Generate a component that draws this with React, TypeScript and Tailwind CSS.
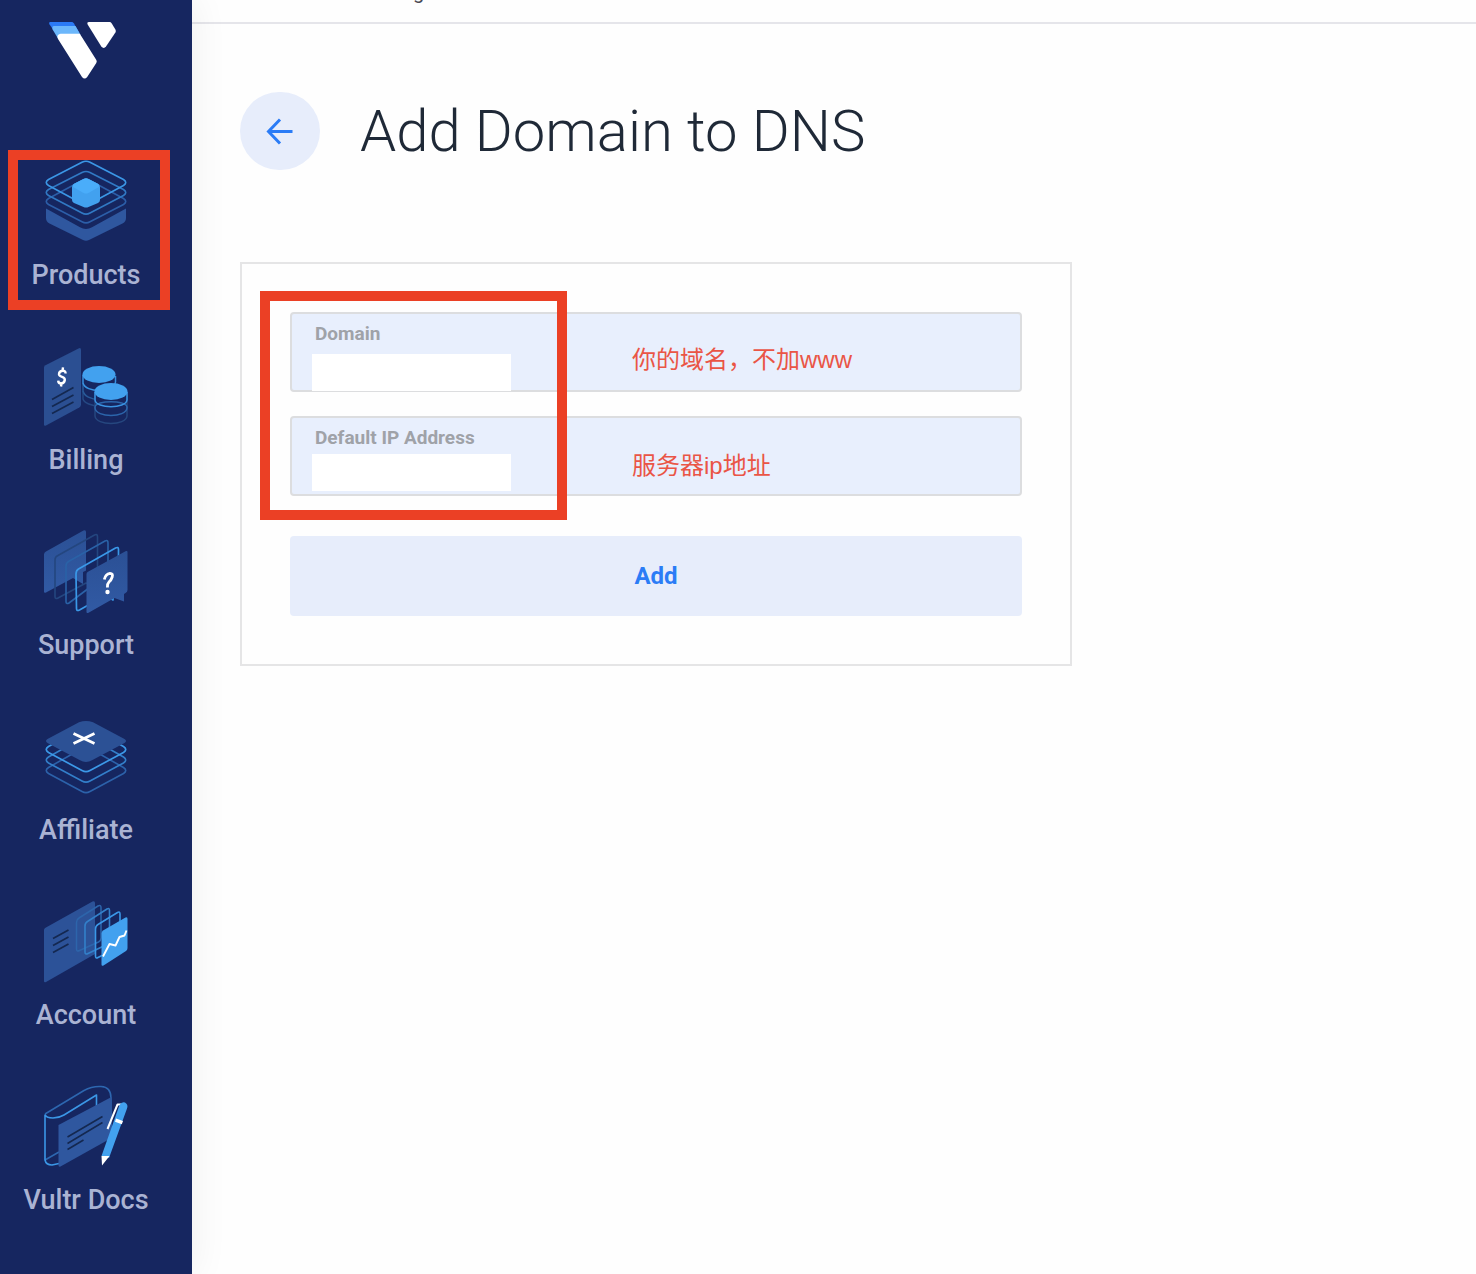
import type { ReactNode } from "react";

function Logo() {
  return (
    <svg viewBox="46 20 74 62" className="h-[62px] w-[74px]" role="img" aria-label="Vultr">
      <path d="M50.2 22H71.6Q73 22 73.8 23.2L79.5 33H55.5L49.2 24Q48.6 22 50.2 22Z" fill="#2b7af5" />
      <path d="M54 26H75.5L80.6 35L60 38.5H58L52.6 29.5Q51.6 26 54 26Z" fill="#6cb7fb" />
      <path d="M60.5 33.8H79.8L96.2 59.8Q97.3 61.4 96.3 63L87.2 77Q84.6 80 82 77L58 39Q56 34.6 60.5 33.8Z" fill="#fff" />
      <path d="M89 22H109.6Q110.8 22 111.6 23.2L115.4 29.4Q116.3 31 115.4 32.6L106 46.6Q103.8 49.4 101.3 46.6L87.8 24.8Q86.4 22 89 22Z" fill="#fff" />
    </svg>
  );
}

function NavIcon({ viewBox, children }: { viewBox: string; children: ReactNode }) {
  return (
    <svg viewBox={viewBox} className="size-[88px]" fill="none" aria-hidden="true" strokeLinejoin="round">
      {children}
    </svg>
  );
}

const ProductsIcon = (
  <NavIcon viewBox="42 158 88 88">
    <path d="M46 208.5L80 227.3Q86 230.5 92 227.3L126 208.5V218Q126 221.5 122.5 223.5L89 240Q86 241.5 83 240L49.5 223.5Q46 221.5 46 218Z" fill="#2f579f" />
    <path d="M82 180.5Q86 178.5 90 180.5L123.5 198.5Q128 201.5 123.5 204.5L90 221.8Q86 224 82 221.8L48.5 204.5Q44 201.5 48.5 198.5Z" stroke="#2c5ea8" strokeWidth="1.6" />
    <path d="M82 172.5Q86 170.5 90 172.5L123.5 189.5Q128 192.5 123.5 195.5L90 213Q86 215.2 82 213L48.5 195.5Q44 192.5 48.5 189.5Z" stroke="#3179c4" strokeWidth="1.6" />
    <path d="M82 162.3Q86 160.2 90 162.3L123.5 179.5Q128 182.5 123.5 185.5L90 203.5Q86 205.7 82 203.5L48.5 185.5Q44 182.5 48.5 179.5Z" stroke="#3b97e6" strokeWidth="1.6" />
    <path d="M84 178.8Q86 177.7 88 178.8L98 183.8Q100 185 100 187V200Q100 202 98 203L88.5 207Q86 208 83.5 207L74 203Q72 202 72 200V187Q72 185 74 183.8Z" fill="#42a1ef" />
    <path d="M84 178.8Q86 177.7 88 178.8L98.5 184.2Q100 186 98.5 187.3L88.5 193Q86 194.2 83.5 193L73.5 187.3Q72 186 73.5 184.2Z" fill="#4aadfa" />
  </NavIcon>
);

const BillingIcon = (
  <NavIcon viewBox="42 343 88 88">
    <path d="M44 367.5Q44 366 45.5 365.2L78.5 348.4Q81 347.2 81 350V404.5Q81 406.500 79.3 407.5L46 425.5Q44 426.5 44 424.5Z" fill="#2b4f92" />
    <path d="M65.6 373.6Q65.600 370.6 62.600 370.800Q58.900 371.400 59 374.400Q59.200 376 62 376.800Q65 377.800 64.800 380Q64.300 383.400 61 383.500Q58.300 383.300 58.200 380.600M63 367.300L62.500 371M61.500 383L61 386.500" stroke="#fff" strokeWidth="2.400" />
    <path d="M52 399.5L73.5 387.5M52 406.5L73.5 395M52 413.5L73.5 402" stroke="#142850" strokeWidth="1.7" />
    <g strokeWidth="1.5">
      <path d="M83 391V399C84 403 92 406 99 406Q110 405.5 114.5 402" stroke="#254883" />
      <path d="M83 383V391C84 396 91 399.5 99 399.5Q108 399.5 115 392" stroke="#285998" />
      <path d="M83 375V383C84 388 92 390.5 99 390.5C108 390.5 115 387 115.5 382V376" stroke="#3991df" />
      <ellipse cx="99" cy="374.5" rx="16.5" ry="8.5" fill="#42a1ef" />
      <path d="M95 392V416C96 426 126 426 127 416V392" fill="#162660" stroke="#26477f" />
      <path d="M95 407C96 400 126 400 127 407V408C126 418 96 418 95 408Z" stroke="#2c65ab" />
      <path d="M95 392V400C96 409 126 409 127 400V392" stroke="#3a94e3" />
      <ellipse cx="111" cy="391.5" rx="16.5" ry="8.5" fill="#42a1ef" />
    </g>
  </NavIcon>
);

const SupportIcon = (
  <NavIcon viewBox="42 528 88 88">
    <defs>
      <linearGradient id="bubble" x1="0" y1="0" x2="0" y2="1">
        <stop offset="0" stopColor="#2b5095" />
        <stop offset="1" stopColor="#315aa4" />
      </linearGradient>
    </defs>
    <path d="M44 554.5Q44 552.5 46 551.5L83.5 530.5Q86 529.5 86 532V570.5L83 572V584L73 578L46 592.5Q44 593.5 44 591.5Z" fill="url(#bubble)" />
    <path d="M55 560Q55 557 57.5 555.8L94.5 535Q97.5 533.5 97.5 537V572Q97.5 576 95 577.3L94 578V586L86 583L58 598Q55 599.5 55 596.5Z" stroke="#24467f" strokeWidth="1.6" />
    <path d="M66 566Q66 563 68.5 561.5L105 541Q108 539.5 108 543V578L106 586L97 582L69 603Q66 604.5 66 601.5Z" stroke="#2a62a7" strokeWidth="1.6" />
    <path d="M76 574Q76 570.5 78.5 569L115.5 548Q118.5 546.5 118.5 549.5V584Q118.5 588 116 589.5L113 591.5V600L106 595L79.5 610Q76.5 611.5 76.5 608.5Z" stroke="#3a98e8" strokeWidth="1.7" />
    <path d="M86.5 574Q86.5 572.5 88 571.7L126 551Q127.5 550.5 127.5 552V590Q127.5 592 125.5 593L124 594V601.5L114.5 598L88.5 612.7Q86.5 613.5 86.5 612Z" fill="url(#bubble)" />
    <path d="M104.3 579.5Q105.500 574 110 573.3Q113.300 573.300 112.200 577Q111.300 580 109 582Q107.200 583.700 107.400 587.500" stroke="#fff" strokeWidth="2.8" />
    <circle cx="107.500" cy="592" r="2.2" fill="#fff" />
  </NavIcon>
);

const AffiliateIcon = (
  <NavIcon viewBox="42 713 88 88">
    <path d="M82 748.5L48.5 767.5Q44 770.5 48.5 773.5L82 791.5Q86 793.7 90 791.5L123.5 773.5Q128 770.5 123.5 767.5L90 748.5Z" stroke="#2c62aa" strokeWidth="1.6" />
    <path d="M82 738L48.5 757Q44 760 48.5 763L82 781Q86 783.2 90 781L123.5 763Q128 760 123.5 757L90 738Z" stroke="#337fca" strokeWidth="1.6" />
    <path d="M82 728L48.5 746.5Q44 749.5 48.5 752.5L82 770.5Q86 772.7 90 770.5L123.5 752.5Q128 749.5 123.5 746.5L90 728Z" stroke="#3c99e8" strokeWidth="1.7" />
    <path d="M79 722.3Q86 719.5 93 722.3L124.5 739Q127.5 741 124.5 743L92 760.3Q86 763.5 80 760.3L47.5 743Q44.5 741 47.5 739Z" fill="#2c5195" />
    <path d="M73.5 733.5L94.5 743.5M94.5 733.5L73.5 743.5" stroke="#fff" strokeWidth="2.8" />
  </NavIcon>
);

const AccountIcon = (
  <NavIcon viewBox="42 898 88 88">
    <path d="M44 930Q44 928.5 45.5 927.7L92.5 901.5Q95 900.5 95 903V954L46 982Q44 983 44 981Z" fill="#2c5298" />
    <path d="M53 938.5L68.5 930M53 945.5L68.5 937M53 952.5L68.5 944" stroke="#142850" strokeWidth="1.7" />
    <path d="M76.5 922.5Q76.5 919.5 79 918L98 906Q101 904.5 101 907.5V938Q101 940.5 98.5 942L79.5 950.5Q76.500 952 76.5 949Z" stroke="#2d65ab" strokeWidth="1.5" />
    <path d="M85 926Q85 923 87.5 921.5L107 909Q109.5 907.5 109.5 910.5V940Q109.5 943 107 944.5L88 953.5Q85 955 85 952Z" stroke="#3380ca" strokeWidth="1.6" />
    <path d="M95.5 929Q95.5 926 98 924.5L117.5 912.5Q120 911 120 914V944Q120 946 118 947.5L98 957.5Q95.5 959 95.5 956Z" stroke="#3a97e7" strokeWidth="1.6" />
    <path d="M101.5 933.5Q101.5 931.5 103 930.5L125.5 917.5Q127.5 916.5 127.5 919V948Q127.5 950 126 951L103.5 965.5Q101.5 966.5 101.5 964.5Z" fill="#42a1ef" />
    <path d="M103 956.5L109.5 944L115.5 945.5L119.5 937L124.5 935.5L126.5 930.5" stroke="#fff" strokeWidth="1.9" />
  </NavIcon>
);

const DocsIcon = (
  <NavIcon viewBox="42 1083 88 88">
    <path d="M45 1114L84 1090.5Q92 1086 101 1086.5Q111 1087 111 1098" stroke="#2d67b0" strokeWidth="1.5" />
    <path d="M111 1098V1144M45 1160L59 1152" stroke="#2d67b0" strokeWidth="1.5" />
    <path d="M45 1114.5Q46 1118 53 1118Q59 1118 64 1115L96.5 1095V1140M45 1114.5V1160Q46 1165 52 1165L59 1163.5" stroke="#3b97e6" strokeWidth="1.6" />
    <path d="M58.5 1125L111.5 1097V1138L60.5 1166.5Q58.5 1167.5 58.5 1165Z" fill="#2f579f" />
    <path d="M67.5 1137L102.5 1116.5M67.5 1143.5L102.5 1122.5M67.5 1149.5L83.5 1140" stroke="#142850" strokeWidth="1.6" />
    <path d="M107.5 1129L117.5 1104.5H121" stroke="#fff" strokeWidth="2" />
    <path d="M119.5 1105Q121.5 1101.5 125 1102.5Q128.5 1104.5 127 1108.5L109 1158L101.5 1156Z" fill="#42a1ef" />
    <path d="M116 1118.5L123 1121L121.8 1124.2L115 1121.8ZM101.5 1156H109.5L102 1165.5Z" fill="#fff" />
  </NavIcon>
);

const NAV = [
  { label: "Products", icon: ProductsIcon, marked: true },
  { label: "Billing", icon: BillingIcon },
  { label: "Support", icon: SupportIcon },
  { label: "Affiliate", icon: AffiliateIcon },
  { label: "Account", icon: AccountIcon },
  { label: "Vultr Docs", icon: DocsIcon },
];

function Sidebar() {
  return (
    <aside className="z-10 flex w-48 shrink-0 flex-col bg-[#162660] pt-5 pr-5 shadow-[0_0_36px_rgba(0,0,0,0.07)]">
      <a href="#home" className="ml-[46px] self-start">
        <Logo />
      </a>
      <nav className="mt-[76px] flex flex-col gap-[51px] pb-14" aria-label="Main">
        {NAV.map((item) => (
          <a
            key={item.label}
            href={"#" + item.label}
            className="relative flex flex-col items-center text-[27px] leading-[34px] font-medium text-[#aab3d3]"
          >
            {item.icon}
            <span className="mt-3">{item.label}</span>
            {item.marked && (
              <span className="absolute -top-2 right-0.5 -bottom-[18px] left-2 border-10 border-[#eb4025]" />
            )}
          </a>
        ))}
      </nav>
    </aside>
  );
}

type FieldProps = { id: string; label: string; note: string; inputGap: string; notePlace: string };

function Field({ id, label, note, inputGap, notePlace }: FieldProps) {
  return (
    <div className="relative h-20 rounded border-2 border-[#dcdddf] bg-[#e8effd] pt-2 pl-5">
      <label htmlFor={id} className="block pl-[3px] text-[19px] leading-6 font-bold text-[#9fa2a8]">
        {label}
      </label>
      <input id={id} type="text" className={"block h-[37px] w-[199px] bg-white px-1 text-xl outline-none " + inputGap} />
      <span
        className={
          "absolute left-[340px] font-['Liberation_Sans','Noto_Sans_CJK_SC',sans-serif] text-2xl leading-9 text-[#ea5546] " +
          notePlace
        }
      >
        {note}
      </span>
    </div>
  );
}

export default function App() {
  return (
    <div className="flex min-h-screen bg-[#fefefe] font-['Roboto',sans-serif]">
      <Sidebar />
      <div className="min-w-0 flex-1">
        <header className="flex h-6 items-end overflow-hidden border-b-2 border-[#e5e5ea] pl-[221px]">
          <span className="mb-[18px] text-xl leading-6 text-[#4a4a55]">g</span>
        </header>
        <main className="px-12 pt-[68px]">
          <div className="flex items-center gap-10">
            <button
              type="button"
              aria-label="Back"
              className="flex h-[78px] w-20 shrink-0 items-center justify-center rounded-full bg-[#e7edfb]"
            >
              <svg viewBox="0 0 28 28" className="size-7" fill="none" stroke="#2b7cf6" strokeWidth="3" aria-hidden="true">
                <path d="M14 2.5L2.5 14.5L14 26.5M2.5 14.5H26.5" />
              </svg>
            </button>
            <h1 className="text-[58px] leading-[78px] font-light text-[#1f2937]">Add Domain to DNS</h1>
          </div>
          <form
            className="relative mt-[92px] w-full max-w-[832px] border-2 border-[#e5e5e6] p-12"
            onSubmit={(e) => e.preventDefault()}
          >
            <div className="flex flex-col gap-6">
              <Field id="domain" label="Domain" note="你的域名，不加www" inputGap="mt-2" notePlace="top-7" />
              <Field id="ip" label="Default IP Address" note="服务器ip地址" inputGap="mt-1" notePlace="top-[30px]" />
            </div>
            <button
              type="submit"
              className="mt-10 block h-20 w-full rounded bg-[#e7edfb] text-2xl font-bold text-[#2b7cf6]"
            >
              Add
            </button>
            <div className="pointer-events-none absolute top-[27px] left-[18px] h-[229px] w-[307px] border-10 border-[#eb4025]" />
          </form>
        </main>
      </div>
    </div>
  );
}
